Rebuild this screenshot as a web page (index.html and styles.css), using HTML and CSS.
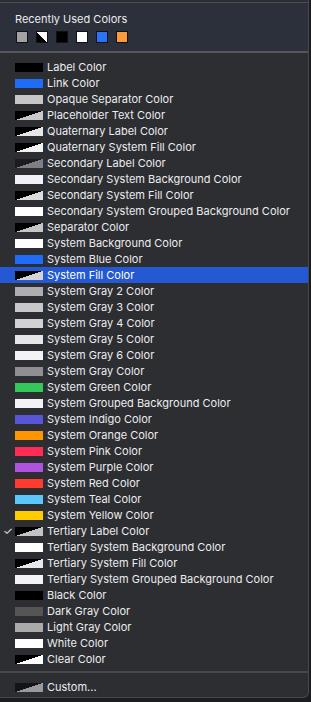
FILE: index.html
```html
<!DOCTYPE html>
<html>
<head>
	<meta charset="utf-8">
	<meta name="viewport" content="width=device-width, initial-scale=1">
	<title>Color Menu</title>
	<link rel="stylesheet" href="styles.css">
</head>
<body>
<div class="menu">

<header class="recent">
	<div class="recent-title">Recently Used Colors</div>
	<div class="recent-row">
		<span class="chip c-gray"></span>
		<span class="chip c-split"></span>
		<span class="chip c-black"></span>
		<span class="chip c-white"></span>
		<span class="chip c-blue"></span>
		<span class="chip c-orange"></span>
	</div>
</header>

<ul class="list">
	<li><i class="sw" style="background:#000"></i>Label Color</li>
	<li><i class="sw" style="background:#1f6cf8"></i>Link Color</li>
	<li><i class="sw" style="background:#c6c6c8"></i>Opaque Separator Color</li>
	<li><i class="sw half" style="--c:#c8c8cc"></i>Placeholder Text Color</li>
	<li><i class="sw half" style="--c:#e6e6ea"></i>Quaternary Label Color</li>
	<li><i class="sw half" style="--c:#f2f2f4"></i>Quaternary System Fill Color</li>
	<li><i class="sw half" style="--c:#7e7e84;--d:#1c1c1e"></i>Secondary Label Color</li>
	<li><i class="sw" style="background:#f0f0f6"></i>Secondary System Background Color</li>
	<li><i class="sw half" style="--c:#dcdce0"></i>Secondary System Fill Color</li>
	<li><i class="sw" style="background:#fff"></i>Secondary System Grouped Background Color</li>
	<li><i class="sw half" style="--c:#c6c6c8"></i>Separator Color</li>
	<li><i class="sw" style="background:#fff"></i>System Background Color</li>
	<li><i class="sw" style="background:#1f6cf8"></i>System Blue Color</li>
	<li class="active"><i class="sw half" style="--c:#d4d4d8"></i>System Fill Color</li>
	<li><i class="sw" style="background:#aeaeb2"></i>System Gray 2 Color</li>
	<li><i class="sw" style="background:#c7c7cc"></i>System Gray 3 Color</li>
	<li><i class="sw" style="background:#d1d1d6"></i>System Gray 4 Color</li>
	<li><i class="sw" style="background:#e5e5ea"></i>System Gray 5 Color</li>
	<li><i class="sw" style="background:#f2f2f7"></i>System Gray 6 Color</li>
	<li><i class="sw" style="background:#8e8e93"></i>System Gray Color</li>
	<li><i class="sw" style="background:#34c759"></i>System Green Color</li>
	<li><i class="sw" style="background:#f2f2f7"></i>System Grouped Background Color</li>
	<li><i class="sw" style="background:#5856d6"></i>System Indigo Color</li>
	<li><i class="sw" style="background:#ff9500"></i>System Orange Color</li>
	<li><i class="sw" style="background:#ff2d55"></i>System Pink Color</li>
	<li><i class="sw" style="background:#af52de"></i>System Purple Color</li>
	<li><i class="sw" style="background:#ff3b30"></i>System Red Color</li>
	<li><i class="sw" style="background:#5ac8fa"></i>System Teal Color</li>
	<li><i class="sw" style="background:#ffcc00"></i>System Yellow Color</li>
	<li class="checked"><i class="sw half" style="--c:#c4c4c8"></i>Tertiary Label Color</li>
	<li><i class="sw" style="background:#fff"></i>Tertiary System Background Color</li>
	<li><i class="sw half" style="--c:#e8e8ec"></i>Tertiary System Fill Color</li>
	<li><i class="sw" style="background:#f2f2f7"></i>Tertiary System Grouped Background Color</li>
	<li><i class="sw" style="background:#000"></i>Black Color</li>
	<li><i class="sw" style="background:#555"></i>Dark Gray Color</li>
	<li><i class="sw" style="background:#aaa"></i>Light Gray Color</li>
	<li><i class="sw" style="background:#fff"></i>White Color</li>
	<li><i class="sw half" style="--c:#fff"></i>Clear Color</li>
</ul>

<ul class="list custom">
	<li><i class="sw half" style="--c:#9a9a9e;--d:#141416"></i>Custom...</li>
</ul>

</div>
</body>
</html>
```

FILE: styles.css
```css
html, *, *::before,
*::after{
	box-sizing: border-box;
}
body{
	margin: 0;
	background: #1c1d20;
	font-family: Inter, "Liberation Sans", sans-serif;
	overflow: hidden;
}
.menu{
	width: 309px;
	height: 698px;
	padding-top: 2px;
	background: #2d2e32;
	border-right: 1px solid #46474b;
	border-bottom: 1px solid #46474b;
	border-bottom-right-radius: 6px;
}
.recent{
	height: 51px;
	padding: 9px 15px 0;
	background: #2b303a;
	border-top: 1px solid #4b4e56;
	border-bottom: 2px solid #55575c;
}
.recent-title{
	color: #ececee;
	font-size: 11px;
	line-height: 14px;
}
.recent-row{
	display: flex;
	gap: 8px;
	margin-top: 5px;
	padding-left: 1px;
}
.chip{
	width: 12px;
	height: 12px;
	border: 1px solid #111;
}
.c-gray{ background: #a2a2a2; }
.c-split{ background: linear-gradient(to top right, #000 50%, #fff 50%); }
.c-black{ background: #000; }
.c-white{ background: #fff; }
.c-blue{ background: #2a72f6; }
.c-orange{ background: #fa9a38; }

.list{
	list-style: none;
	margin: 0;
	padding: 6px 0 0;
}
.list li{
	position: relative;
	display: flex;
	align-items: center;
	height: 16px;
	padding-left: 15px;
	color: #ececee;
	font-size: 11px;
}
.list li.active{
	background: #2459d3;
	color: #fff;
}
.list li.checked::before{
	content: "\2713";
	position: absolute;
	left: 3px;
	top: 0;
	font-size: 11px;
	line-height: 16px;
	color: #e2e2e4;
}
.sw{
	display: block;
	width: 28px;
	height: 9px;
	margin-right: 4px;
	flex: none;
}
.sw.half{
	background: linear-gradient(to bottom right, var(--d, #000) 50%, var(--c) 50%);
}
.custom{
	margin-top: 4px;
	border-top: 2px solid #47484c;
}
```
